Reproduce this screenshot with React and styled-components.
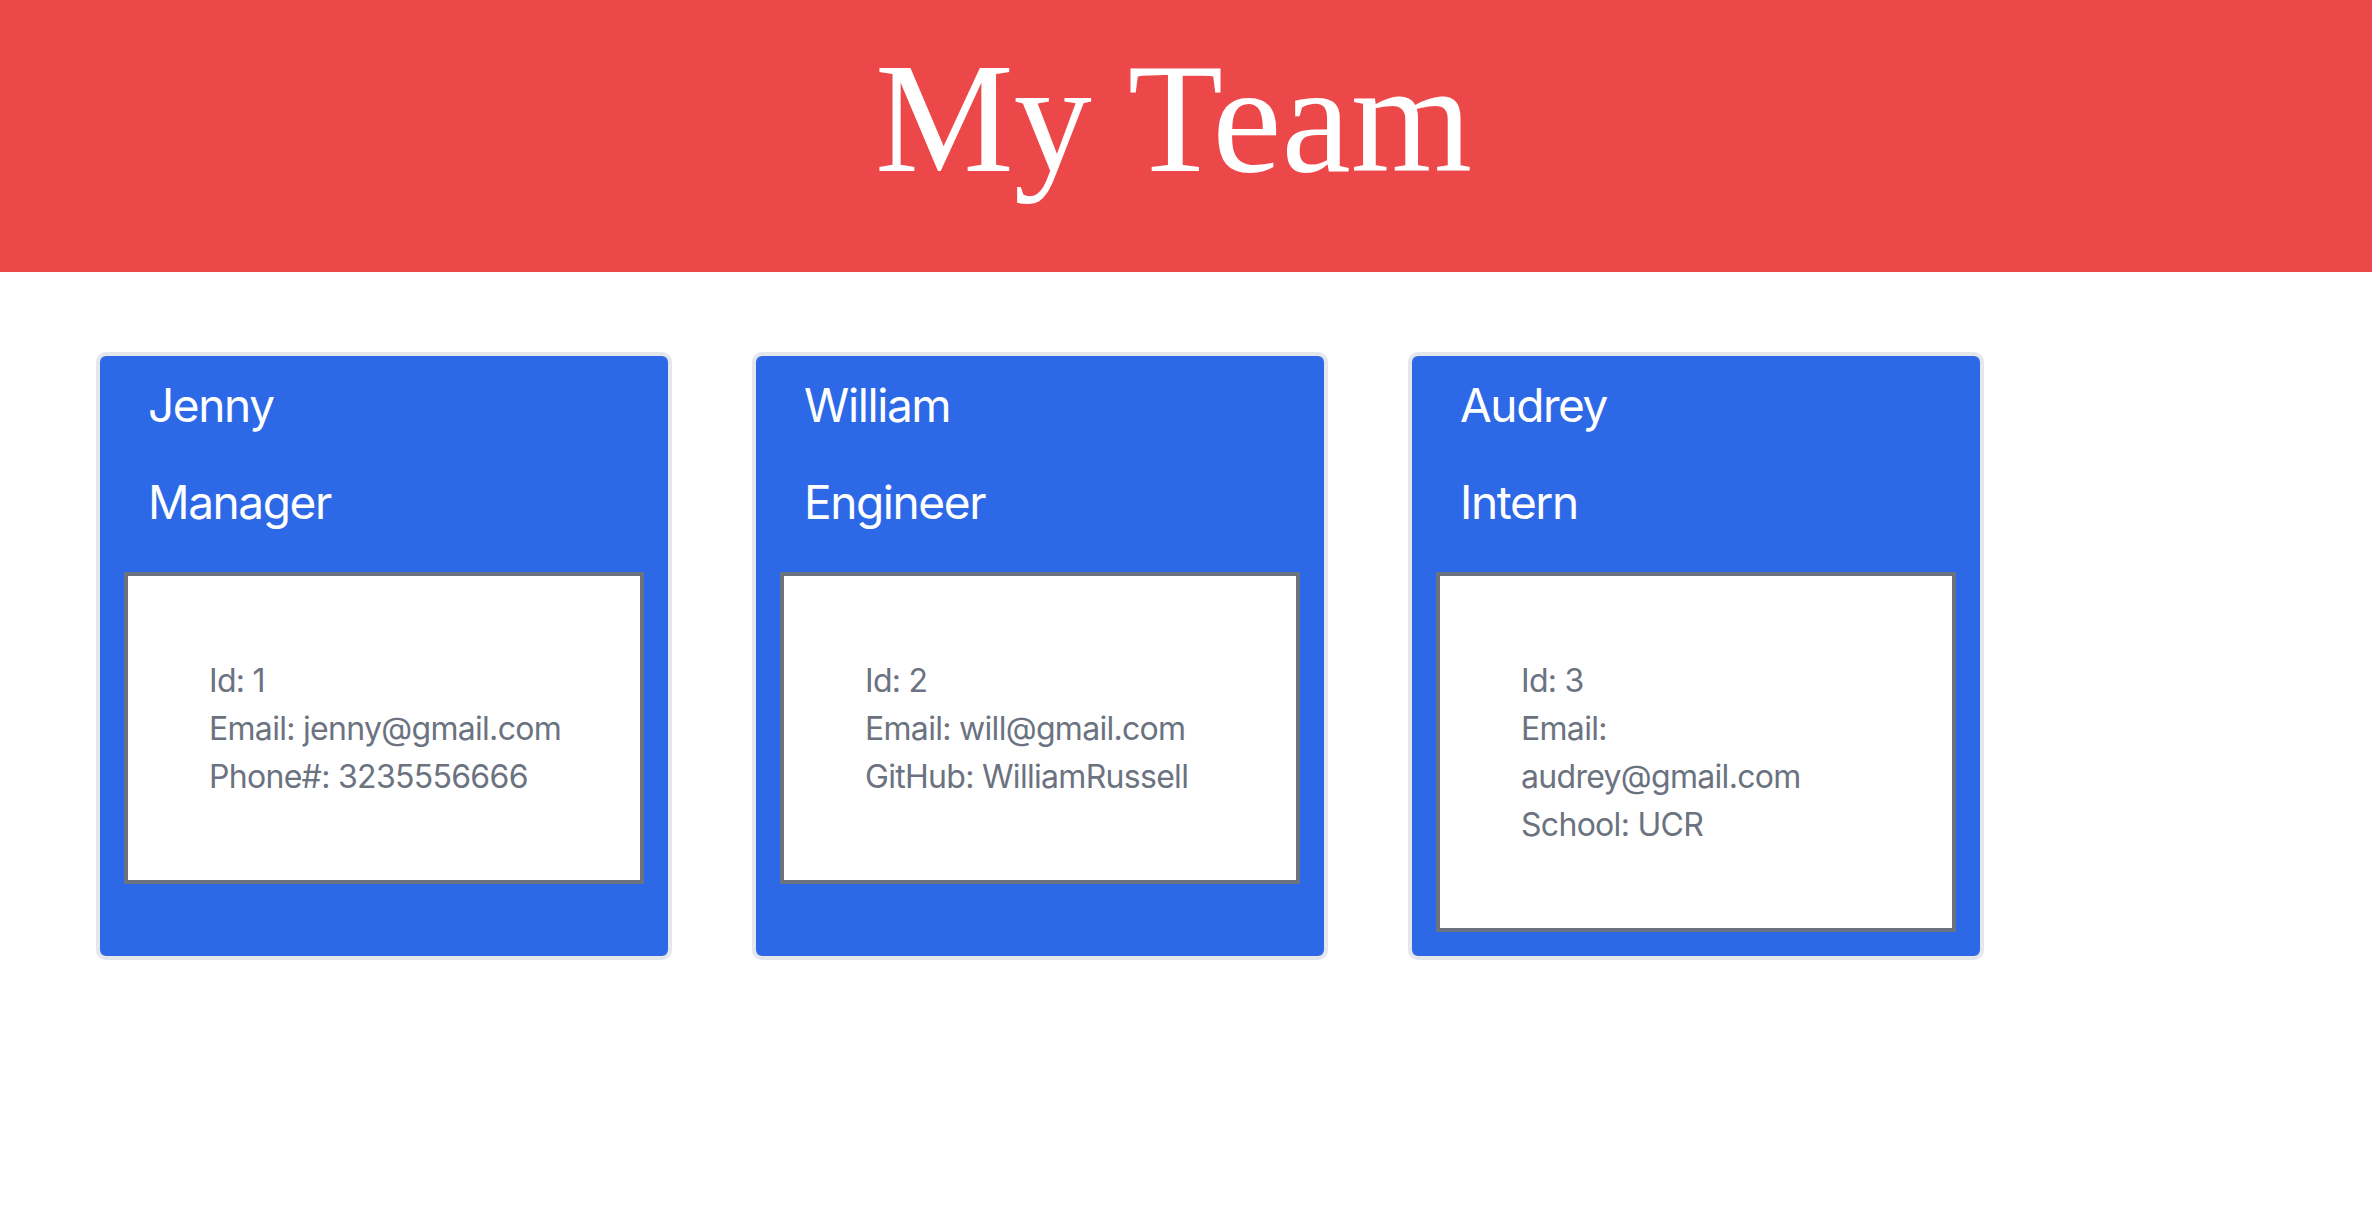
import React from "react";
import styled, { createGlobalStyle } from "styled-components";

const GlobalStyle = createGlobalStyle`
  html, body {
    margin: 0;
    padding: 0;
    background: #ffffff;
  }
  body {
    font-family: Inter, "Noto Sans", "Liberation Sans", sans-serif;
  }
`;

const Header = styled.header`
  box-sizing: border-box;
  height: 272px;
  background: #ec4849;
  padding: 29px 25px 0 0;
  text-align: center;
`;

const Title = styled.h1`
  margin: 0;
  font-family: "Liberation Serif", "Times New Roman", serif;
  font-weight: 400;
  font-size: 156px;
  line-height: normal;
  color: #ffffff;
`;

const Main = styled.main`
  display: flex;
  align-items: stretch;
  gap: 80px;
  padding: 80px 0 0 96px;
`;

const Card = styled.section`
  box-sizing: border-box;
  width: 576px;
  background: #2d69e7;
  border: 4px solid #e5e7eb;
  border-radius: 10px;
  padding: 21px 24px 24px;
`;

const CardHeader = styled.div`
  padding-left: 24px;
`;

const Name = styled.h2`
  margin: 0;
  font-family: Inter, "Noto Sans", sans-serif;
  font-weight: 400;
  font-size: 46px;
  letter-spacing: -1.4px;
  line-height: 56px;
  color: #ffffff;
`;

const Role = styled.h3`
  margin: 41px 0 0;
  font-family: Inter, "Noto Sans", sans-serif;
  font-weight: 400;
  font-size: 46px;
  letter-spacing: -1.4px;
  line-height: 56px;
  color: #ffffff;
`;

const InfoBox = styled.div`
  margin-top: 42px;
  background: #ffffff;
  border: 4px solid #6b7280;
  padding: 81px 76px 79px 81px;
`;

const InfoList = styled.ul`
  list-style: none;
  margin: 0;
  padding: 0;
`;

const InfoItem = styled.li`
  font-family: Inter, "Noto Sans", sans-serif;
  font-size: 32px;
  letter-spacing: -0.7px;
  line-height: 48px;
  color: #6b7280;
`;

const team = [
  {
    name: "Jenny",
    role: "Manager",
    info: ["Id: 1", "Email: jenny@gmail.com", "Phone#: 3235556666"],
  },
  {
    name: "William",
    role: "Engineer",
    info: ["Id: 2", "Email: will@gmail.com", "GitHub: WilliamRussell"],
  },
  {
    name: "Audrey",
    role: "Intern",
    info: ["Id: 3", "Email: audrey@gmail.com", "School: UCR"],
  },
];

export default function App() {
  return (
    <>
      <GlobalStyle />
      <Header>
        <Title>My Team</Title>
      </Header>
      <Main>
        {team.map((m) => (
          <Card key={m.name}>
            <CardHeader>
              <Name>{m.name}</Name>
              <Role>{m.role}</Role>
            </CardHeader>
            <InfoBox>
              <InfoList>
                {m.info.map((line) => (
                  <InfoItem key={line}>{line}</InfoItem>
                ))}
              </InfoList>
            </InfoBox>
          </Card>
        ))}
      </Main>
    </>
  );
}
